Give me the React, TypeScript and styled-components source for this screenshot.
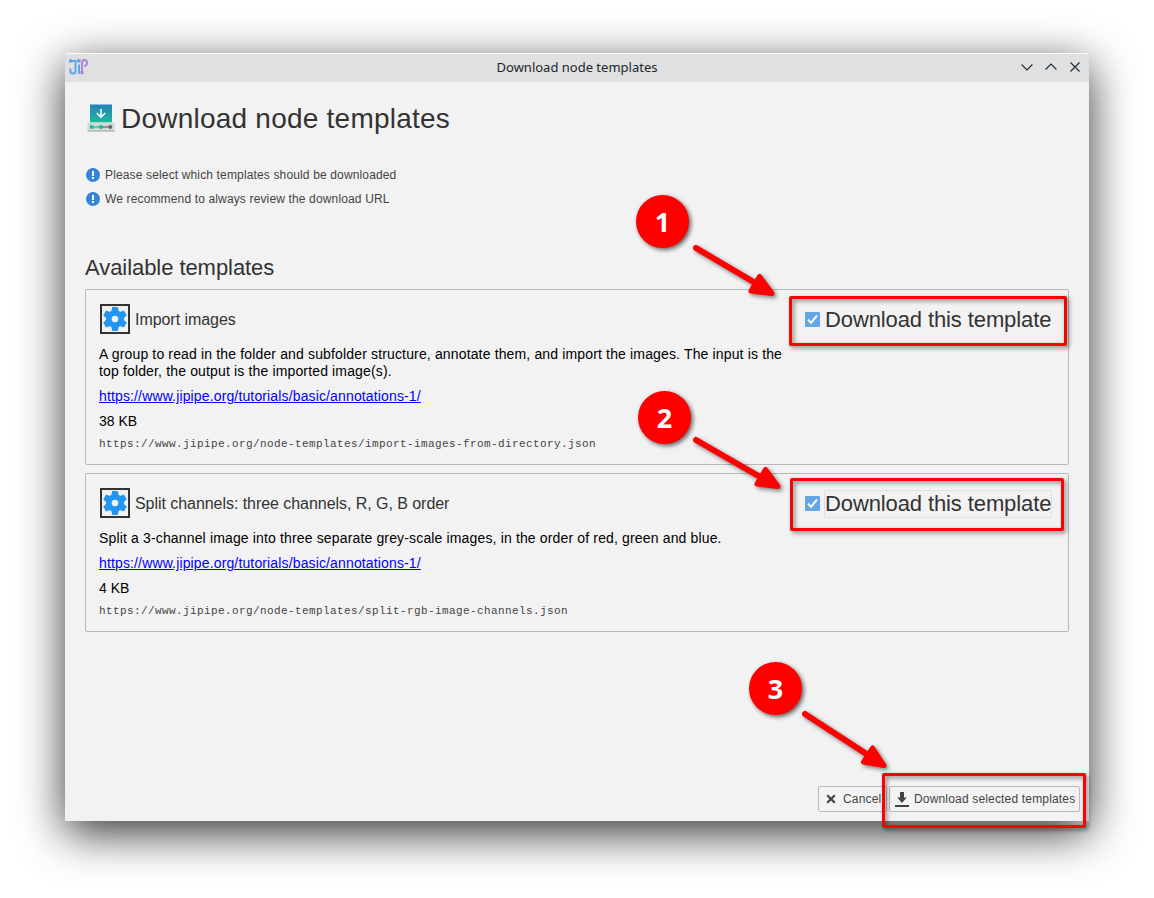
import React from 'react';
import styled, { createGlobalStyle } from 'styled-components';

const GlobalStyle = createGlobalStyle`
  body { margin: 0; background: #fff; }
  * { box-sizing: border-box; }
`;

const Desktop = styled.div`
  position: relative;
  width: 1154px;
  height: 898px;
  padding: 53px 65px 77px;
  overflow: hidden;
  background: #fff;
  font-family: 'Liberation Sans', Arial, sans-serif;
  color: #333;
`;

const Window = styled.main`
  display: flex;
  flex-direction: column;
  width: 1024px;
  height: 768px;
  background: #f2f2f2;
  border-radius: 4px 4px 0 0;
  box-shadow: 0 12px 46px rgba(0, 0, 0, 0.8);
`;

const TitleBar = styled.header`
  display: grid;
  grid-template-columns: 80px 1fr 80px;
  align-items: center;
  height: 29px;
  padding: 0 8px 2px 3px;
  background: #dee0e2;
  border-top: 1px solid #fbfbfb;
  border-radius: 4px 4px 0 0;
`;

const WindowTitle = styled.div`
  text-align: center;
  font: 13px/18px 'Noto Sans', sans-serif;
  color: #232629;
  padding-left: 5px;
`;

const WindowControls = styled.div`
  display: flex;
  justify-content: flex-end;
  gap: 12px;
`;

const Content = styled.section`
  flex: 1;
  display: flex;
  flex-direction: column;
  padding: 20px 20px 9px;
`;

const PageHeading = styled.div`
  display: flex;
  align-items: center;
  gap: 4px;
  height: 32px;
`;

const PageTitle = styled.h1`
  margin: 2px 0 0;
  font-size: 28px;
  font-weight: 400;
  line-height: 32px;
  letter-spacing: 0.23px;
`;

const Hints = styled.div`
  margin-top: 29px;
`;

const Hint = styled.div`
  display: flex;
  align-items: center;
  gap: 5px;
  height: 24px;
  padding-left: 1px;
  font-size: 12px;
  letter-spacing: 0.145px;
  color: #444;
`;

const SectionTitle = styled.h2`
  margin: 44px 0 9px;
  font-size: 22px;
  font-weight: 400;
  line-height: 25px;
  letter-spacing: -0.06px;
`;

const Card = styled.article<{ $height: number }>`
  height: ${(p) => p.$height}px;
  margin-bottom: 8px;
  padding: 14px 16px 0 13px;
  border: 1px solid #b9b9bd;
  border-radius: 2px;
`;

const CardTop = styled.div`
  display: flex;
  align-items: center;
  height: 30px;
`;

const IconFrame = styled.div`
  width: 30px;
  height: 30px;
  margin: 0 5px 0 1px;
  border: 2px solid #333;
`;

const TemplateName = styled.div`
  flex: 1;
  padding-top: 2px;
  font-size: 16px;
  letter-spacing: -0.05px;
`;

const Toggle = styled.label`
  display: flex;
  align-items: center;
  gap: 4px;
`;

const CheckMark = styled.svg`
  margin-top: 1px;
`;

const ToggleText = styled.span<{ $focused: boolean }>`
  width: 228px;
  height: 28px;
  margin-top: 2px;
  padding-left: 1px;
  font-size: 22px;
  line-height: 28px;
  letter-spacing: -0.11px;
  white-space: nowrap;
  box-shadow: ${(p) => (p.$focused ? 'inset 0 0 0 1px #e1e1e1' : 'none')};
`;

const Description = styled.p`
  width: 690px;
  margin: 12px 0 0;
  font-size: 14px;
  line-height: 17px;
  letter-spacing: 0.15px;
  color: #000;
`;

const TemplateLink = styled.a`
  display: block;
  margin-top: 8px;
  font-size: 14px;
  line-height: 17px;
  letter-spacing: 0.14px;
  color: #00f;
  text-decoration: underline;
`;

const Size = styled.div`
  margin-top: 8px;
  font-size: 14px;
  line-height: 17px;
  color: #000;
`;

const Source = styled.div`
  margin-top: 7px;
  font: 11px/14px 'Liberation Mono', monospace;
  letter-spacing: 0.4px;
  color: #444;
`;

const Actions = styled.footer`
  display: flex;
  justify-content: flex-end;
  gap: 2px;
  margin: auto -11px 0 0;
`;

const Button = styled.button<{ $width: number; $gap: number; $pad: number }>`
  display: flex;
  align-items: center;
  gap: ${(p) => p.$gap}px;
  width: ${(p) => p.$width}px;
  height: 26px;
  padding: 0 0 0 ${(p) => p.$pad}px;
  border: 1px solid #b9b9c0;
  border-radius: 2px;
  background: #f3f3f3;
  font: 12px 'Liberation Sans', Arial, sans-serif;
  letter-spacing: 0.17px;
  color: #444;
  white-space: nowrap;
`;

const Annotations = styled.div`
  position: absolute;
  inset: 0;
  pointer-events: none;
`;

const Highlight = styled.div<{ $x: number; $y: number; $w: number; $h: number }>`
  position: absolute;
  left: ${(p) => p.$x}px;
  top: ${(p) => p.$y}px;
  width: ${(p) => p.$w}px;
  height: ${(p) => p.$h}px;
  border: 3px solid #f00;
  border-radius: 2px;
  filter: drop-shadow(2px 2px 2px rgba(0, 0, 0, 0.5));
`;

const Badge = styled.div<{ $x: number; $y: number }>`
  position: absolute;
  left: ${(p) => p.$x}px;
  top: ${(p) => p.$y}px;
  width: 53px;
  height: 53px;
  border-radius: 50%;
  background: #f00;
  color: #fff;
  text-align: center;
  font: 700 27px/54px 'Noto Sans', sans-serif;
  box-shadow: 2px 2px 4px rgba(0, 0, 0, 0.6);
`;

const ArrowLayer = styled.svg`
  position: absolute;
  inset: 0;
  filter: drop-shadow(2px 2px 2px rgba(0, 0, 0, 0.5));
`;

const Logo = () => (
  <svg width="20" height="18" viewBox="0 0 20 18" fill="none" strokeWidth="2">
    <path d="M3 3H7.5V13Q7.5 15.5 5 15.5Q2.3 15.5 2.3 12V10.5M11 6.5V16" stroke="#62a4e4" />
    <path d="M1 1.3h3.2v3.2H1zM9.2 1.3h3.4v3.2H9.2z" fill="#62a4e4" />
    <path d="M14 14V5.5Q14 2 16.6 2Q19 2 19 4.9Q19 8.2 16 7.6" stroke="#b184e0" />
    <path d="M12.4 13h3.2v3.2h-3.2z" fill="#b184e0" />
  </svg>
);

const DownloadNodeIcon = () => (
  <svg width="32" height="32" viewBox="0 0 32 32" fill="none">
    <defs>
      <linearGradient id="screen" x1="0" y1="0" x2="0" y2="1">
        <stop stopColor="#2980b9" />
        <stop offset="1" stopColor="#1abc9c" />
      </linearGradient>
    </defs>
    <path d="M5 2.5H27V20.5H5z" fill="url(#screen)" />
    <path d="M16 7V15M11.8 11L16 15.2L20.2 11" stroke="#fff" strokeWidth="1.6" />
    <path d="M2.5 20.5H29.5V29.5H2.5z" fill="#d5d8d9" />
    <path d="M2.5 28.3H29.5V29.7H2.5z" fill="#b4b8ba" />
    <path d="M7 25H16" stroke="#1abc9c" strokeWidth="1.2" />
    <path d="M16 25H25" stroke="#666" strokeWidth="1.2" />
    <circle cx="6.7" cy="25" r="2" fill="#1abc9c" />
    <circle cx="16" cy="25" r="2" fill="#1abc9c" />
    <circle cx="25.3" cy="25" r="2" fill="#666" />
  </svg>
);

const InfoIcon = () => (
  <svg width="14" height="14" viewBox="0 0 14 14">
    <circle cx="7" cy="7" r="7" fill="#3584dc" />
    <path d="M6 3h2v5H6zM6 9h2v2H6z" fill="#fff" />
  </svg>
);

const Gear = () => (
  <svg width="26" height="26" viewBox="-13 -13 26 26">
    {[0, 60, 120].map((a) => (
      <path key={a} d="M-2.8 -12H2.8L3.8 -7V7L2.8 12H-2.8L-3.8 7V-7z" fill="#2196f3" transform={`rotate(${a})`} />
    ))}
    <circle r="9" fill="#2196f3" />
    <circle r="3.3" fill="#f2f2f2" />
  </svg>
);

const Check = () => (
  <CheckMark width="15" height="15" viewBox="0 0 15 15" fill="none">
    <rect width="15" height="15" rx="1" fill="#64a5e5" />
    <path d="M3 7.6L6 11L12 3.7" stroke="#fff" strokeWidth="2" />
  </CheckMark>
);

interface Template {
  name: string;
  description: string;
  size: string;
  source: string;
  height: number;
  focused: boolean;
}

const templates: Template[] = [
  {
    name: 'Import images',
    description:
      'A group to read in the folder and subfolder structure, annotate them, and import the images. The input is the top folder, the output is the imported image(s).',
    size: '38 KB',
    source: 'https://www.jipipe.org/node-templates/import-images-from-directory.json',
    height: 176,
    focused: false,
  },
  {
    name: 'Split channels: three channels, R, G, B order',
    description:
      'Split a 3-channel image into three separate grey-scale images, in the order of red, green and blue.',
    size: '4 KB',
    source: 'https://www.jipipe.org/node-templates/split-rgb-image-channels.json',
    height: 159,
    focused: true,
  },
];

const arrows = [
  { line: 'M696 248L757 284', head: 'M759.5 276.5L751 291L772 293.5z' },
  { line: 'M696 440L762 478', head: 'M765.5 469.5L757 484L778 486.5z' },
  { line: 'M805 714L868 755', head: 'M872.5 748L863.5 762L884 765.5z' },
];

export default function App() {
  return (
    <Desktop>
      <GlobalStyle />
      <Window>
        <TitleBar>
          <Logo />
          <WindowTitle>Download node templates</WindowTitle>
          <WindowControls>
            <svg width="12" height="12" fill="none" stroke="#232629" strokeWidth="1.1"><path d="M.6 3.5L6 8.9L11.4 3.5" /></svg>
            <svg width="12" height="12" fill="none" stroke="#232629" strokeWidth="1.1"><path d="M.6 8.5L6 3.1L11.4 8.5" /></svg>
            <svg width="12" height="12" fill="none" stroke="#232629" strokeWidth="1.1"><path d="M1.5 1.5L10.5 10.5M10.5 1.5L1.5 10.5" /></svg>
          </WindowControls>
        </TitleBar>
        <Content>
          <PageHeading>
            <DownloadNodeIcon />
            <PageTitle>Download node templates</PageTitle>
          </PageHeading>
          <Hints>
            <Hint><InfoIcon />Please select which templates should be downloaded</Hint>
            <Hint><InfoIcon />We recommend to always review the download URL</Hint>
          </Hints>
          <SectionTitle>Available templates</SectionTitle>
          {templates.map((t) => (
            <Card key={t.name} $height={t.height}>
              <CardTop>
                <IconFrame><Gear /></IconFrame>
                <TemplateName>{t.name}</TemplateName>
                <Toggle>
                  <Check />
                  <ToggleText $focused={t.focused}>Download this template</ToggleText>
                </Toggle>
              </CardTop>
              <Description>{t.description}</Description>
              <TemplateLink>https://www.jipipe.org/tutorials/basic/annotations-1/</TemplateLink>
              <Size>{t.size}</Size>
              <Source>{t.source}</Source>
            </Card>
          ))}
          <Actions>
            <Button $width={69} $gap={7} $pad={7}>
              <svg width="10" height="10" stroke="#444" strokeWidth="2.2"><path d="M1.2 1.2L8.8 8.8M8.8 1.2L1.2 8.8" /></svg>
              Cancel
            </Button>
            <Button $width={191} $gap={5} $pad={5}>
              <svg width="14" height="16" fill="#444"><path d="M5 1H9V6.5H11.8L7 12L2.2 6.5H5zM0 14H14V16H0z" /></svg>
              Download selected templates
            </Button>
          </Actions>
        </Content>
      </Window>
      <Annotations>
        <Highlight $x={789} $y={296} $w={278} $h={50} />
        <Highlight $x={790} $y={478} $w={274} $h={53} />
        <Highlight $x={882} $y={773} $w={204} $h={55} />
        <ArrowLayer width="1154" height="898">
          {arrows.map((a) => (
            <g key={a.line} stroke="#f00" strokeLinecap="round" strokeLinejoin="round">
              <path d={a.line} strokeWidth="6" />
              <path d={a.head} strokeWidth="5" fill="#f00" />
            </g>
          ))}
        </ArrowLayer>
        <Badge $x={636} $y={195}>1</Badge>
        <Badge $x={638} $y={391}>2</Badge>
        <Badge $x={749} $y={662}>3</Badge>
      </Annotations>
    </Desktop>
  );
}
